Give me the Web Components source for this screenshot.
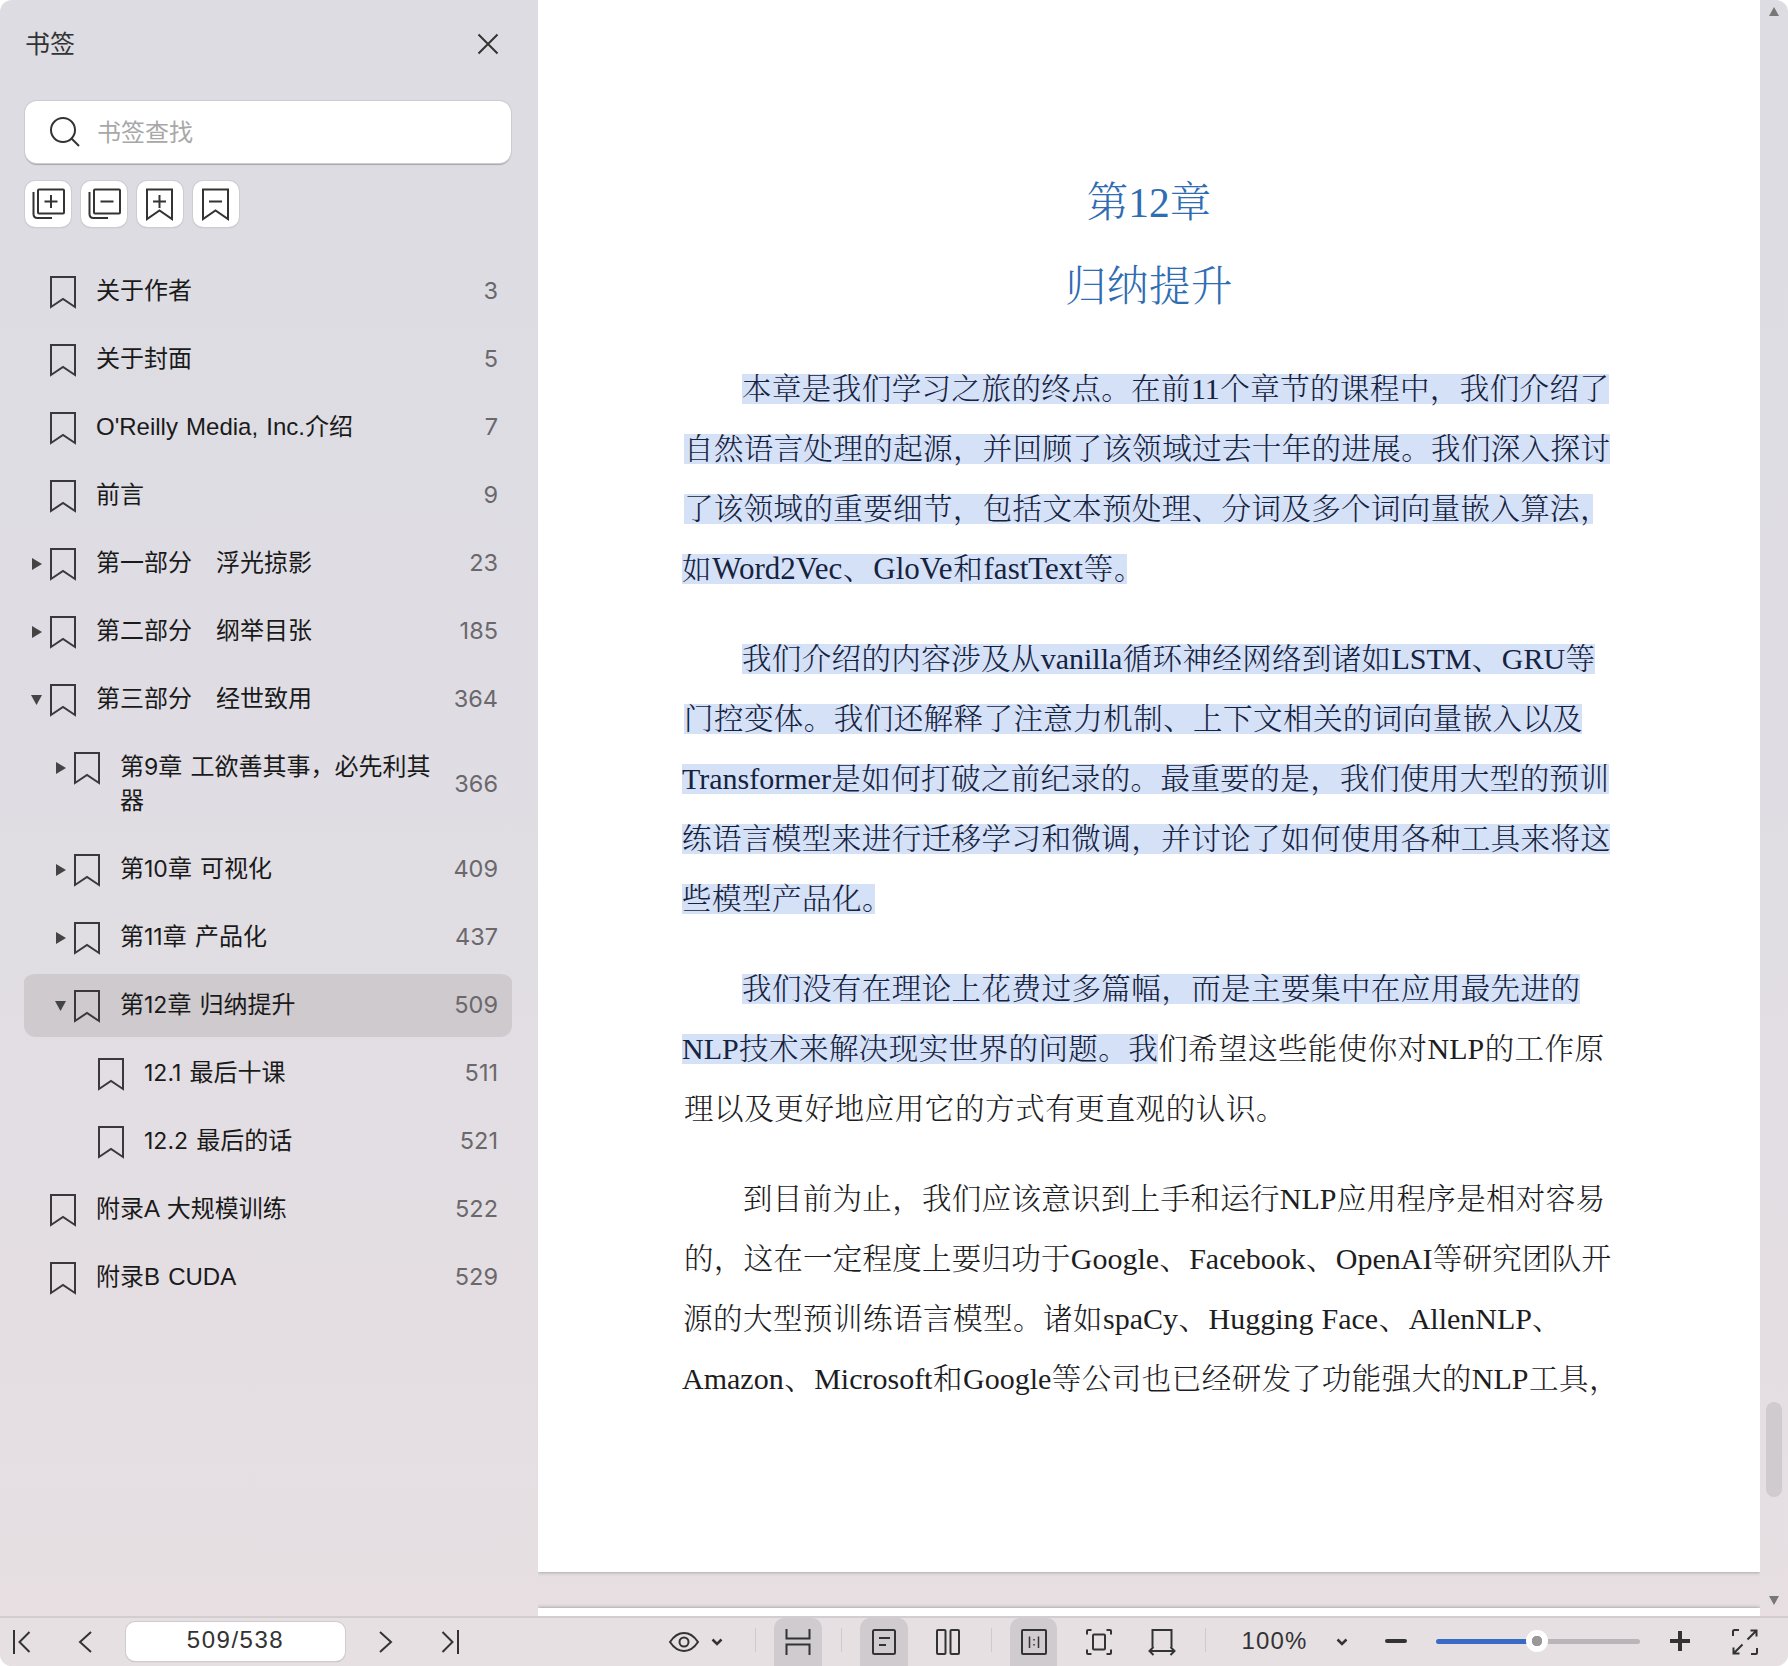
<!DOCTYPE html>
<html lang="zh"><head><meta charset="utf-8"><title>书签</title>
<style>
html,body{margin:0;padding:0;background:#fff}
body{width:1788px;height:1666px;overflow:hidden;font-family:"Liberation Sans","Noto Sans CJK SC",sans-serif}
.d{font-family:Inter,"Liberation Sans",sans-serif;font-size:23px}
</style></head><body>
<app-shell>
  <bm-sidebar slot="side">
    <bm-row num="3">关于作者</bm-row>
    <bm-row num="5">关于封面</bm-row>
    <bm-row num="7">O'Reilly Media, Inc.介绍</bm-row>
    <bm-row num="9">前言</bm-row>
    <bm-row arrow="r" num="23">第一部分　浮光掠影</bm-row>
    <bm-row arrow="r" num="185">第二部分　纲举目张</bm-row>
    <bm-row arrow="d" num="364">第三部分　经世致用</bm-row>
    <bm-row depth="1" arrow="r" num="366">第<span class="d">9</span>章 工欲善其事，必先利其<br>器</bm-row>
    <bm-row depth="1" arrow="r" num="409">第<span class="d">10</span>章 可视化</bm-row>
    <bm-row depth="1" arrow="r" num="437">第<span class="d">11</span>章 产品化</bm-row>
    <bm-row depth="1" arrow="d" num="509" active>第<span class="d">12</span>章 归纳提升</bm-row>
    <bm-row depth="2" num="511"><span class="d">12.1</span> 最后十课</bm-row>
    <bm-row depth="2" num="521"><span class="d">12.2</span> 最后的话</bm-row>
    <bm-row num="522">附录A 大规模训练</bm-row>
    <bm-row num="529">附录B CUDA</bm-row>
  </bm-sidebar>
  <pdf-viewer slot="main">
    <pdf-page>
      <pdf-para>
        <pdf-line i="60" w="867" hl="本章是我们学习之旅的终点。在前11个章节的课程中，我们介绍了"></pdf-line>
        <pdf-line i="2" w="926" hl="自然语言处理的起源，并回顾了该领域过去十年的进展。我们深入探讨"></pdf-line>
        <pdf-line i="2" w="909" hl="了该领域的重要细节，包括文本预处理、分词及多个词向量嵌入算法，"></pdf-line>
        <pdf-line i="0" w="445" lf="31" hl="如Word2Vec、GloVe和fastText等。"></pdf-line>
      </pdf-para>
      <pdf-para>
        <pdf-line i="60" w="853" hl="我们介绍的内容涉及从vanilla循环神经网络到诸如LSTM、GRU等"></pdf-line>
        <pdf-line i="2" w="898" hl="门控变体。我们还解释了注意力机制、上下文相关的词向量嵌入以及"></pdf-line>
        <pdf-line i="0" w="927" hl="Transformer是如何打破之前纪录的。最重要的是，我们使用大型的预训"></pdf-line>
        <pdf-line i="0" w="928" hl="练语言模型来进行迁移学习和微调，并讨论了如何使用各种工具来将这"></pdf-line>
        <pdf-line i="0" w="193" hl="些模型产品化。"></pdf-line>
      </pdf-para>
      <pdf-para>
        <pdf-line i="60" w="838" hl="我们没有在理论上花费过多篇幅，而是主要集中在应用最先进的"></pdf-line>
        <pdf-line i="0" w="922" hl="NLP技术来解决现实世界的问题。我" rest="们希望这些能使你对NLP的工作原"></pdf-line>
        <pdf-line i="2" w="585" rest="理以及更好地应用它的方式有更直观的认识。"></pdf-line>
      </pdf-para>
      <pdf-para>
        <pdf-line i="61" w="862" rest="到目前为止，我们应该意识到上手和运行NLP应用程序是相对容易"></pdf-line>
        <pdf-line i="2" w="927" rest="的，这在一定程度上要归功于Google、Facebook、OpenAI等研究团队开"></pdf-line>
        <pdf-line i="1" w="862" rest="源的大型预训练语言模型。诸如spaCy、Hugging Face、AllenNLP、"></pdf-line>
        <pdf-line i="0" w="920" rest="Amazon、Microsoft和Google等公司也已经研发了功能强大的NLP工具，"></pdf-line>
      </pdf-para>
    </pdf-page>
  </pdf-viewer>
  <tool-bar slot="bar"></tool-bar>
</app-shell>
<script>
const ICONS={
 search:[30,30,'<circle cx="13" cy="13" r="12"/><path d="M21.5 21.5L29 29"/>'],
 close:[22,22,'<path d="M1.5 1.5L20.5 20.5M20.5 1.5L1.5 20.5"/>'],
 bookmark:[26,32,'<path d="M1 1H25V31L13 23L1 31Z"/>'],
 expandAll:[46,46,'<rect x="13" y="8.500" width="26" height="24" rx="1"/><path d="M8.500 11V33Q8.500 37 12.500 37H27M26 14V27M19.500 20.500H32.500"/>'],
 collapseAll:[46,46,'<rect x="13" y="8.500" width="26" height="24" rx="1"/><path d="M8.500 11V33Q8.500 37 12.500 37H27M19.500 20.500H32.500"/>'],
 bmPlus:[46,46,'<path d="M10 8.500H35V38L22.500 29.500L10 38ZM22.500 14V27M16 20.500H29"/>'],
 bmMinus:[46,46,'<path d="M10 8.500H35V38L22.500 29.500L10 38ZM16 20.500H29"/>'],
 first:[20,26,'<path d="M2 1V25M17.500 3L7.500 13L17.500 23"/>'],
 prev:[14,22,'<path d="M13 1L2 11L13 21"/>'],
 next:[14,22,'<path d="M1 1L12 11L1 21"/>'],
 last:[20,26,'<path d="M18 1V25M2.500 3L12.500 13L2.500 23"/>'],
 eye:[30,20,'<path d="M1 10C5 4 10 1 15 1S25 4 29 10C25 16 20 19 15 19S5 16 1 10Z"/><circle cx="15" cy="10" r="4.500"/>'],
 caret:[12,8,'<path d="M1.500 1.500L6 6L10.500 1.500" stroke-width="2.500"/>'],
 continuous:[26,26,'<path d="M1.500 0V9.500H24.500V0M1.500 26V15.500H24.500V26"/>'],
 single:[24,26,'<rect x="1" y="1" width="22" height="24" rx="1.500"/><path d="M7 9H18M7 16H14"/>'],
 twopage:[24,26,'<rect x="1" y="1" width="8.500" height="24" rx="1"/><rect x="14.500" y="1" width="8.500" height="24" rx="1"/>'],
 actual:[26,26,'<rect x="1" y="1" width="24" height="24" rx="1"/><path stroke-width="1.500" d="M8.500 7.500V19M17.500 7.500V19"/><path stroke-width="1.500" d="M13 10V11.500M13 15V16.500"/>'],
 fitpage:[26,26,'<path d="M1 5.500V2Q1 1 2 1H5.500M20.500 1H24Q25 1 25 2V5.500M25 20.500V24Q25 25 24 25H20.500M5.500 25H2Q1 25 1 24V20.500"/><rect x="7" y="5.500" width="12" height="15" rx="1"/>'],
 fitwidth:[28,26,'<path d="M4.500 18V1H23.500V18M1.500 22H26.500M5.500 18L1.500 22L5.500 26M22.500 18L26.500 22L22.500 26"/>'],
 full:[26,26,'<path d="M1 7V2.500Q1 1 2.500 1H7M25 19V23.500Q25 25 23.500 25H19M15.500 10.500L24.500 1.500M18.500 1.500H24.500V7.500M10.500 15.500L1.500 24.500M7.500 24.500H1.500V18.500"/>']
};
class AppIcon extends HTMLElement{
  connectedCallback(){
    const [w,h,body]=ICONS[this.getAttribute('name')];
    const sw=this.getAttribute('sw')||'2',c=this.getAttribute('color')||'#333';
    this.shadowRoot||this.attachShadow({mode:'open'});
    this.shadowRoot.innerHTML=`<style>:host{display:inline-flex;flex:none}svg{display:block;overflow:visible}</style><svg width="${w}" height="${h}" viewBox="0 0 ${w} ${h}" fill="none" stroke="${c}" stroke-width="${sw}" stroke-linejoin="miter" stroke-linecap="butt">${body}</svg>`;
  }
}
customElements.define('app-icon',AppIcon);

class AppShell extends HTMLElement{
  constructor(){super();this.attachShadow({mode:'open'}).innerHTML=`<style>
  :host{display:grid;grid-template-columns:538px 1fr;grid-template-rows:1616px 50px;width:1788px;height:1666px;border-radius:12px;overflow:hidden;
   background:linear-gradient(180deg,#dcdce2 0%,#dfdde3 45%,#e7dfe2 100%)}
  ::slotted([slot=bar]){grid-column:1 / 3}
  </style><slot name="side"></slot><slot name="main"></slot><slot name="bar"></slot>`;}
}
customElements.define('app-shell',AppShell);

class BmTool extends HTMLElement{
  constructor(){super();this.attachShadow({mode:'open'}).innerHTML=`<style>
  :host{display:flex;width:46px;height:46px;box-sizing:border-box;background:#fff;border-radius:10px;box-shadow:0 0 0 1px #cfcdd1,0 1px 1px #aaa8ac}
  </style><slot></slot>`;}
}
customElements.define('bm-tool',BmTool);

class BmSidebar extends HTMLElement{
  constructor(){super();this.attachShadow({mode:'open'}).innerHTML=`<style>
  :host{display:flex;flex-direction:column;width:538px;overflow:hidden;color:#1a1a1a}
  header{display:flex;align-items:center;justify-content:space-between;height:88px;padding:0 39px 0 25px;font-size:25px;color:#333}
  header span{padding-bottom:4px}
  .search{display:flex;align-items:center;gap:17px;box-sizing:border-box;margin:13px 27px 0 25px;height:62px;padding-left:25px;background:#fff;border-radius:12px;box-shadow:0 0 0 1px #cdcbcf,0 1.500px 1px #a9a7ab;font-size:24px;color:#a8a8a8}
  .search span{padding-bottom:3px}
  .tools{display:flex;gap:10px;margin:18px 25px 29px}
  .list{display:flex;flex-direction:column}
  </style>
  <header><span>书签</span><app-icon name="close" color="#333"></app-icon></header>
  <div class="search"><app-icon name="search" color="#333"></app-icon><span>书签查找</span></div>
  <div class="tools">
    <bm-tool><app-icon name="expandAll"></app-icon></bm-tool>
    <bm-tool><app-icon name="collapseAll"></app-icon></bm-tool>
    <bm-tool><app-icon name="bmPlus"></app-icon></bm-tool>
    <bm-tool><app-icon name="bmMinus"></app-icon></bm-tool>
  </div>
  <div class="list"><slot></slot></div>`;}
}
customElements.define('bm-sidebar',BmSidebar);

class BmRow extends HTMLElement{
  connectedCallback(){
    if(this.shadowRoot)return;
    const d=+(this.getAttribute('depth')||0),a=this.getAttribute('arrow');
    const arrow=a==='r'?'<svg width="10" height="12" viewBox="0 0 10 12"><path d="M0 0L10 6L0 12Z" fill="#444"/></svg>':a==='d'?'<svg width="11" height="10" viewBox="0 0 11 10"><path d="M0 0H11L5.500 10Z" fill="#444"/></svg>':'';
    this.attachShadow({mode:'open'}).innerHTML=`<style>
    :host{display:flex;box-sizing:border-box;margin:0 26px 0 24px;border-top:4px solid transparent;border-bottom:1px solid transparent;padding:13px 14px 16px ${1+d*24}px;background-clip:padding-box;border-radius:12px;font-size:24px;line-height:34px;color:#1a1a1a;word-spacing:1.500px}
    :host([active]){background-color:#cfcace}
    .a{flex:none;width:25px;height:32px;margin:3px 0 -1px;padding-right:8px;box-sizing:border-box;display:flex;align-items:center;justify-content:flex-end}
    .b{flex:none;margin:3px 20px -1px 0;height:32px}
    .t{flex:1;min-width:0;margin:1px 0 -1px}
    .n{flex:none;width:58px;text-align:right;align-self:center;color:#6a686c;font:23.500px Inter,"Liberation Sans",sans-serif;word-spacing:0}
    </style><span class="a">${arrow}</span><span class="b"><app-icon name="bookmark" color="#3a383c"></app-icon></span><span class="t"><slot></slot></span><span class="n">${this.getAttribute('num')}</span>`;
  }
}
customElements.define('bm-row',BmRow);

class PdfViewer extends HTMLElement{
  constructor(){super();this.attachShadow({mode:'open'}).innerHTML=`<style>
  :host{display:grid;grid-template-columns:1222px 28px;height:1616px;overflow:hidden}
  .pages{display:flex;flex-direction:column;gap:36px;height:1616px;overflow:hidden}
  .next{flex:none;height:60px;background:#fff;box-shadow:0 0 4px rgba(0,0,0,.4)}
  .strip{display:flex;flex-direction:column;align-items:center;height:1616px;box-sizing:border-box;padding:7px 0 11px}
  .up{width:0;height:0;border:5px solid transparent;border-top:0;border-bottom:9px solid #777}
  .thumb{width:16px;height:95px;border-radius:8px;background:#cfcbce;margin-top:auto;margin-bottom:99px}
  .down{width:0;height:0;border:5px solid transparent;border-bottom:0;border-top:9px solid #777}
  </style>
  <div class="pages"><slot></slot><div class="next"></div></div>
  <div class="strip"><div class="up"></div><div class="thumb"></div><div class="down"></div></div>`;}
}
customElements.define('pdf-viewer',PdfViewer);

class PdfPage extends HTMLElement{
  constructor(){super();this.attachShadow({mode:'open'}).innerHTML=`<style>
  :host{display:block;flex:none;box-sizing:border-box;height:1572px;padding:173px 0 0 144px;background:#fff;box-shadow:0 0 4px rgba(0,0,0,.4);
    font-family:"Liberation Serif","Noto Serif CJK SC","Noto Sans CJK SC",serif}
  h1{margin:0 0 0 -144px;font-weight:300;font-size:41.500px;line-height:60px;color:#2f6db3;text-align:center}
  h1+h1{margin-top:24px;margin-bottom:42px;letter-spacing:.5px}
  </style><h1>第12章</h1><h1>归纳提升</h1><slot></slot>`;}
}
customElements.define('pdf-page',PdfPage);

class PdfPara extends HTMLElement{
  constructor(){super();this.attachShadow({mode:'open'}).innerHTML=`<style>:host{display:block;margin-bottom:30px}</style><slot></slot>`;}
}
customElements.define('pdf-para',PdfPara);

class PdfLine extends HTMLElement{
  connectedCallback(){
    if(this.shadowRoot)return;
    const lat=s=>(s||'').replace(/[A-Za-z0-9 ]+/g,m=>`<span class="l">${m}</span>`);
    const trim=s=>(s||'').replace(/[，。、]$/,m=>`<span class="e">${m}</span>`);
    const i=this.getAttribute('i')||0,w=this.getAttribute('w'),lf=this.getAttribute('lf')||30;
    const hl=this.getAttribute('hl'),rest=this.getAttribute('rest');
    this.attachShadow({mode:'open'}).innerHTML=`<style>
    :host{display:block;height:60px;margin-left:${i}px;width:${w}px;font-size:29.500px;line-height:60px;color:#1d1d1f;font-weight:300;white-space:nowrap;text-align:justify;text-align-last:justify}
    .h{color:#16233f;background:linear-gradient(#d5e1f6,#d5e1f6) no-repeat center / 100% 30px}
    .l{font-size:${lf}px}
    .e{display:inline-block;width:13px}
    </style>${hl?`<span class="h">${trim(lat(hl))}</span>`:''}${trim(lat(rest))}`;
  }
}
customElements.define('pdf-line',PdfLine);

class ToolBar extends HTMLElement{
  constructor(){super();
    const ic=(n,w,ml,extra='')=>`<span class="b ${extra}" style="width:${w}px;margin-left:${ml}px"><app-icon name="${n}"></app-icon></span>`;
    const sep=ml=>`<i class="s" style="margin-left:${ml}px"></i>`;
    this.attachShadow({mode:'open'}).innerHTML=`<style>
    :host{display:flex;align-items:stretch;height:50px;box-sizing:border-box;border-top:2px solid #d2cdd1;background:#e6e0e3;color:#333;font-size:24px}
    .b{flex:none;display:flex;align-items:center;justify-content:center}
    .on{background:#cfcbce;border-radius:10px 10px 0 0}
    .s{flex:none;width:1px;height:24px;margin-top:10px;background:#cfcacd}
    .pg{flex:none;box-sizing:border-box;width:219px;height:39px;margin:4px 0 0 19.500px;background:#fff;border-radius:9px;box-shadow:0 0 0 1px #cfcacd,0 1px 1px #a9a5a8;text-align:center;line-height:36px;letter-spacing:1.500px;color:#333}
    .z{flex:none;width:67px;margin-left:35px;line-height:46px;letter-spacing:1.200px;text-align:center}
    .tr{flex:none;width:204px;margin-left:29px;height:5px;margin-top:21px;border-radius:3px;background:linear-gradient(90deg,#3a6bc4 0 101px,#b9b5b8 101px)}
    .th{display:block;width:22px;height:22px;margin:-9px 0 0 90px;border-radius:50%;background:radial-gradient(circle,#9a989b 0 5px,#fff 5.500px)}
    .mi{flex:none;width:22px;height:4px;border-radius:2px;background:#333;margin:21px 0 0 33px}
    .pl{flex:none;width:20px;height:20px;margin:13px 0 0 30px;background:linear-gradient(#333,#333) center / 100% 4px no-repeat,linear-gradient(#333,#333) center / 4px 100% no-repeat;border-radius:1px}
    .eye{flex:none;width:75px;margin-left:188px;margin-right:1px;display:flex;align-items:center;padding-left:10px;gap:12px;box-sizing:border-box}
    </style>
    ${ic('first',43,0)}${ic('prev',43,20.5)}
    <span class="pg">509/538</span>
    ${ic('next',42,20)}${ic('last',43,21)}
    <span class="eye"><app-icon name="eye"></app-icon><app-icon name="caret"></app-icon></span>
    ${sep(20)}${ic('continuous',48,18,'on')}${sep(19)}${ic('single',48,18,'on')}${ic('twopage',48,16)}${sep(19)}${ic('actual',47,18,'on')}${ic('fitpage',48,18)}${ic('fitwidth',48,15)}${sep(19)}
    <span class="z">100%</span>
    ${ic('caret',20,24)}
    <span class="mi"></span>
    <span class="tr"><span class="th"></span></span>
    <span class="pl"></span>
    ${ic('full',26,42)}`;
  }
}
customElements.define('tool-bar',ToolBar);
</script>
</body></html>
